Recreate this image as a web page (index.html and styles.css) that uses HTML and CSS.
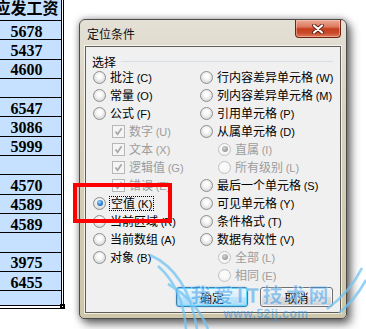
FILE: index.html
```html
<!DOCTYPE html>
<html>
<head>
<meta charset="utf-8">
<link rel="stylesheet" href="styles.css">
</head>
<body>
<div class="desk">
  <div class="sheet">
    <div class="cells">
      <div class="cell head">应发工资</div>
      <div class="cell">5678</div>
      <div class="cell">5437</div>
      <div class="cell">4600</div>
      <div class="cell"></div>
      <div class="cell">6547</div>
      <div class="cell">3086</div>
      <div class="cell">5999</div>
      <div class="cell"></div>
      <div class="cell">4570</div>
      <div class="cell">4589</div>
      <div class="cell">4589</div>
      <div class="cell"></div>
      <div class="cell">3975</div>
      <div class="cell">6455</div>
      <div class="cell last"></div>
    </div>
  </div>

  <div class="dialog">
    <div class="titlebar">
      <span class="title">定位条件</span>
      <span class="close">
        <svg width="12" height="10" viewBox="0 0 12 10"><path d="M2 1.5 L10 8.5 M10 1.5 L2 8.5" stroke="#5a1c10" stroke-width="3.8" stroke-linecap="round"/><path d="M2 1.5 L10 8.5 M10 1.5 L2 8.5" stroke="#fff" stroke-width="2.2" stroke-linecap="round"/></svg>
      </span>
    </div>
    <div class="client">
      <div class="group-head"><span>选择</span><span class="line"></span></div>
      <div class="options">
        <div class="col left">
          <div class="opt"><span class="radio"></span><span>批注 <span class="key">(C)</span></span></div>
          <div class="opt"><span class="radio"></span><span>常量 <span class="key">(O)</span></span></div>
          <div class="opt"><span class="radio"></span><span>公式 <span class="key">(F)</span></span></div>
          <div class="opt sub1 dis"><span class="check"><svg width="11" height="11" viewBox="0 0 11 11"><path d="M2.5 5.5 L4.6 8.2 L8.6 2.2" fill="none" stroke="#a8a8a8" stroke-width="1.7"/></svg></span><span>数字 <span class="key">(U)</span></span></div>
          <div class="opt sub1 dis"><span class="check"><svg width="11" height="11" viewBox="0 0 11 11"><path d="M2.5 5.5 L4.6 8.2 L8.6 2.2" fill="none" stroke="#a8a8a8" stroke-width="1.7"/></svg></span><span>文本 <span class="key">(X)</span></span></div>
          <div class="opt sub1 dis"><span class="check"><svg width="11" height="11" viewBox="0 0 11 11"><path d="M2.5 5.5 L4.6 8.2 L8.6 2.2" fill="none" stroke="#a8a8a8" stroke-width="1.7"/></svg></span><span>逻辑值 <span class="key">(G)</span></span></div>
          <div class="opt sub1 dis"><span class="check"><svg width="11" height="11" viewBox="0 0 11 11"><path d="M2.5 5.5 L4.6 8.2 L8.6 2.2" fill="none" stroke="#a8a8a8" stroke-width="1.7"/></svg></span><span>错误 <span class="key">(E)</span></span></div>
          <div class="opt"><span class="radio on"></span><span class="focus">空值 <span class="key">(K)</span></span></div>
          <div class="opt"><span class="radio"></span><span>当前区域 <span class="key">(R)</span></span></div>
          <div class="opt"><span class="radio"></span><span>当前数组 <span class="key">(A)</span></span></div>
          <div class="opt"><span class="radio"></span><span>对象 <span class="key">(B)</span></span></div>
        </div>
        <div class="col right">
          <div class="opt"><span class="radio"></span><span>行内容差异单元格 <span class="key">(W)</span></span></div>
          <div class="opt"><span class="radio"></span><span>列内容差异单元格 <span class="key">(M)</span></span></div>
          <div class="opt"><span class="radio"></span><span>引用单元格 <span class="key">(P)</span></span></div>
          <div class="opt"><span class="radio"></span><span>从属单元格 <span class="key">(D)</span></span></div>
          <div class="opt sub2 dis"><span class="radio on"></span><span>直属 <span class="key">(I)</span></span></div>
          <div class="opt sub2 dis"><span class="radio"></span><span>所有级别 <span class="key">(L)</span></span></div>
          <div class="opt"><span class="radio"></span><span>最后一个单元格 <span class="key">(S)</span></span></div>
          <div class="opt"><span class="radio"></span><span>可见单元格 <span class="key">(Y)</span></span></div>
          <div class="opt"><span class="radio"></span><span>条件格式 <span class="key">(T)</span></span></div>
          <div class="opt"><span class="radio"></span><span>数据有效性 <span class="key">(V)</span></span></div>
          <div class="opt sub2 dis"><span class="radio on"></span><span>全部 <span class="key">(L)</span></span></div>
          <div class="opt sub2 dis"><span class="radio"></span><span>相同 <span class="key">(E)</span></span></div>
        </div>
      </div>
      <div class="buttons">
        <span class="btn default">确定</span>
        <span class="btn">取消</span>
      </div>
    </div>
  </div>
</div>

<div class="handle"></div>
<div class="mark"></div>

<svg class="swoosh" width="366" height="329" viewBox="0 0 366 329">
  <path d="M150 255 Q 188 272 197 329" />
  <path d="M158 266 Q 183 288 186 329" />
  <path d="M168 284 Q 196 300 208 329" />
  <path d="M362 268 Q 350 292 327 309" />
  <path d="M366 280 Q 355 300 339 313" />
</svg>
<div class="watermark">
  <div class="wm-name">我爱IT技术网</div>
  <div class="wm-url">www.52ij.com</div>
</div>
</body>
</html>
```

FILE: styles.css
```css
html, body {
  margin: 0;
  padding: 0;
}
body {
  width: 366px;
  height: 329px;
  overflow: hidden;
  background: #fff;
  position: relative;
  font-family: "Noto Sans CJK SC", "Noto Sans", sans-serif;
  color: #000;
}
.desk {
  display: flex;
  align-items: flex-start;
}

/* spreadsheet column */
.sheet {
  flex: none;
  margin-left: -8px;
  border-right: 1px solid #000;
  border-bottom: 1px solid #000;
  padding: 0 1px 2px 0;
  background: #fff;
}
.cells {
  width: 70px;
  box-sizing: border-box;
  border-right: 1px solid #000;
  background: #c6e0ff;
  display: flex;
  flex-direction: column;
}
.cell {
  box-sizing: border-box;
  height: 19.3px;
  border-bottom: 1px solid #000;
  display: flex;
  align-items: center;
  justify-content: center;
  padding-top: 3px;
  font: bold 16px "Liberation Serif", serif;
  white-space: nowrap;
}
.cell.head {
  height: 21px;
  padding: 0 0 7px;
  font: 700 16px "Noto Sans CJK SC", sans-serif;
  line-height: 16px;
}
.cell.last {
  height: 15px;
}
.handle {
  position: absolute;
  left: 60px;
  top: 304px;
  width: 5px;
  height: 5px;
  background: #000;
}
.handle::after {
  content: "";
  position: absolute;
  left: 2px;
  top: 2px;
  width: 1px;
  height: 1px;
  background: #fff;
}

/* dialog window */
.dialog {
  flex: none;
  margin: 19px 0 0 15px;
  width: 268px;
  height: 300px;
  box-sizing: border-box;
  border: 1px solid #4c4c4c;
  border-radius: 6px 6px 5px 5px;
  background: linear-gradient(#e4e0d5, #d8d2c0 30%, #cec6a9);
  padding: 0 5px 5px;
  display: flex;
  flex-direction: column;
  box-shadow: 4px 5px 10px rgba(0,0,0,0.55), 0 0 7px rgba(0,0,0,0.35);
}
.titlebar {
  flex: none;
  height: 26px;
  display: flex;
  align-items: flex-start;
  justify-content: space-between;
}
.title {
  padding-left: 2px;
  line-height: 27px;
  font-size: 12px;
  color: #101010;
}
.close {
  margin-right: 0;
  width: 46px;
  height: 18px;
  box-sizing: border-box;
  border: 1px solid #6e2314;
  border-top: none;
  border-radius: 0 0 4px 4px;
  background: linear-gradient(#eaa995 0%, #de7a60 40%, #c4401f 52%, #c8492a 75%, #dc7a5c 100%);
  box-shadow: inset 0 0 0 1px rgba(255,220,200,0.45);
  display: flex;
  align-items: center;
  justify-content: center;
}
.client {
  flex: 1;
  border: 1px solid #5f5d55;
  background: #f0f0f0;
  box-shadow: 0 0 0 1px rgba(255,255,250,0.7);
  display: flex;
  flex-direction: column;
}
.group-head {
  margin-top: 8px;
  height: 13px;
  display: flex;
  align-items: center;
  padding: 0 7px 0 6px;
  font-size: 12px;
  line-height: 13px;
}
.group-head .line {
  flex: 1;
  height: 1px;
  background: #d5dfe5;
  margin-left: 5px;
}
.options {
  display: flex;
  padding-left: 7px;
}
.col {
  display: flex;
  flex-direction: column;
}
.col.left {
  width: 107px;
}
.opt {
  height: 18px;
  display: flex;
  align-items: center;
  font-size: 12px;
  line-height: 14px;
  white-space: nowrap;
}
.opt.sub1 { padding-left: 19px; }
.opt.sub2 { padding-left: 18px; }
.opt.dis { color: #9c9c9c; }
.key {
  font-family: "Liberation Sans", sans-serif;
  font-size: 11px;
}
.radio {
  flex: none;
  position: relative;
  width: 13px;
  height: 13px;
  box-sizing: border-box;
  margin-right: 4px;
  border-radius: 50%;
  border: 1px solid #8e8f8f;
  background: radial-gradient(circle at 50% 40%, #ffffff 20%, #e4e4e4 60%, #c9c9c9 100%);
}
.radio.on::after {
  content: "";
  position: absolute;
  left: 2.5px;
  top: 2.5px;
  width: 6px;
  height: 6px;
  border-radius: 50%;
  background: radial-gradient(circle at 40% 35%, #9ee0ff 0%, #2b7cd0 55%, #0e4a93 100%);
}
.opt.dis .radio {
  border-color: #c2c2c2;
  background: radial-gradient(circle at 50% 40%, #fbfbfb 30%, #ececec 100%);
}
.opt.dis .radio.on::after {
  background: radial-gradient(circle at 40% 35%, #d4d4d4 0%, #9a9a9a 70%, #8a8a8a 100%);
}
.check {
  flex: none;
  width: 13px;
  height: 13px;
  box-sizing: border-box;
  margin-right: 4px;
  border: 1px solid #b7b7b7;
  background: #f5f5f5;
  display: flex;
  align-items: center;
  justify-content: center;
}
.focus {
  outline: 1px dotted #000;
  padding: 0 1px;
  line-height: 11px;
  display: inline-block;
}
.buttons {
  display: flex;
  justify-content: flex-end;
  gap: 12px;
  padding-right: 7px;
  margin-top: 3px;
}
.btn {
  width: 73px;
  height: 20px;
  box-sizing: border-box;
  border: 1px solid #707070;
  border-radius: 3px;
  background: linear-gradient(#f2f2f2 0%, #ebebeb 50%, #dddddd 51%, #cfcfcf 100%);
  box-shadow: inset 0 0 0 1px rgba(255,255,255,0.7);
  font-size: 12px;
  display: flex;
  align-items: center;
  justify-content: center;
}
.btn.default {
  width: 72px;
  border-color: #3c7fb1;
  background: linear-gradient(#eaf6fd 0%, #d9f0fc 50%, #bee6fd 51%, #a7d9f5 100%);
  box-shadow: inset 0 0 0 1px #5fd6ff, 0 0 2px #7ac8f0;
}

/* overlays */
.mark {
  position: absolute;
  left: 73px;
  top: 183px;
  width: 99px;
  height: 40px;
  box-sizing: border-box;
  border: 4px solid #f00;
}
.swoosh {
  position: absolute;
  left: 0;
  top: 0;
  fill: none;
  stroke: #72c4f4;
  stroke-width: 2.6;
  opacity: 0.75;
}
.watermark {
  position: absolute;
  left: 186px;
  top: 283px;
  width: 150px;
  text-align: center;
}
.wm-name {
  font: 900 20px "Noto Sans CJK SC", sans-serif;
  line-height: 24px;
  letter-spacing: 3px;
  color: rgba(50,150,230,0.5);
  -webkit-text-stroke: 0.6px rgba(255,255,255,0.6);
}
.wm-url {
  margin-left: 10px;
  font: bold 12px "Liberation Sans", sans-serif;
  line-height: 14px;
  letter-spacing: 0.5px;
  color: rgba(50,150,230,0.55);
}
```
